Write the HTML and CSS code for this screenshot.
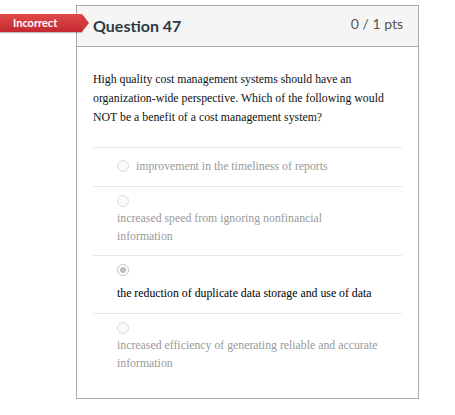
FILE: index.html
```html
<!DOCTYPE html>
<html>
<head>
<meta charset="utf-8">
<link rel="stylesheet" href="styles.css">
</head>
<body>
<div class="page">
  <div class="badge">Incorrect</div>
  <div class="card">
    <div class="card-header">
      <h2 class="q-title">Question 47</h2>
      <div class="q-points">0 / 1 pts</div>
    </div>
    <div class="card-body">
      <p class="q-text">High quality cost management systems should have an organization-wide perspective. Which of the following would NOT be a benefit of a cost management system?</p>
      <div class="answers">
        <div class="answer answer-inline">
          <span class="radio"></span><span class="answer-text">improvement in the timeliness of reports</span>
        </div>
        <div class="answer">
          <div class="radio-line"><span class="radio"></span></div>
          <div class="answer-text">increased speed from ignoring nonfinancial<br>information</div>
        </div>
        <div class="answer answer-selected">
          <div class="radio-line"><span class="radio radio-checked"></span></div>
          <div class="answer-text">the reduction of duplicate data storage and use of data</div>
        </div>
        <div class="answer answer-last">
          <div class="radio-line"><span class="radio"></span></div>
          <div class="answer-text">increased efficiency of generating reliable and accurate<br>information</div>
        </div>
      </div>
    </div>
  </div>
</div>
</body>
</html>
```

FILE: styles.css
```css
* { box-sizing: border-box; }
html, body { margin: 0; padding: 0; background: #fff; }
.page { position: relative; padding: 5px 0 0 76px; }
.badge {
  position: absolute;
  left: 0; top: 14px;
  width: 82px; height: 18px;
  background: linear-gradient(#e14a4a, #c42a2f);
  color: #fff;
  font: bold 11px/18px "Lato", "Liberation Sans", sans-serif;
  padding-left: 13px;
  z-index: 2;
  box-shadow: 0 1px 1px rgba(0,0,0,0.25);
}
.badge::after {
  content: "";
  position: absolute;
  left: 82px; top: 0;
  border-top: 9px solid transparent;
  border-bottom: 9px solid transparent;
  border-left: 7px solid #d43a3d;
}
.card {
  width: 343px;
  border: 1px solid #aaaaaa;
  background: #fff;
}
.card-header {
  height: 41px;
  background: #f5f5f5;
  border-bottom: 1px solid #aaaaaa;
  display: flex;
  justify-content: space-between;
  align-items: flex-start;
  padding: 0 15px 0 16px;
}
.q-title {
  margin: 0;
  padding-top: 10px;
  font: bold 16px/20px "Lato", sans-serif;
  color: #2d3b45;
}
.q-points {
  padding-top: 9px;
  font: 14px/18px "Lato", sans-serif;
  color: #555;
}
.card-body { padding: 23px 16px 16px 16px; }
.q-text {
  margin: 0 0 20px 0;
  font: 11.8px/19px "Liberation Serif", serif;
  color: #111;
}
.answers { font: 11.8px/18px "Liberation Serif", serif; }
.answer {
  border-top: 1px solid #e8e8e8;
  padding: 6px 0 10px 24px;
  color: #9a9a9a;
}
.answer-inline { padding: 9px 0 11px 24px; display: flex; align-items: center; }
.answer-inline .radio { margin-right: 7px; }
.radio-line { height: 16px; display: flex; align-items: center; }
.radio {
  display: inline-block;
  width: 12px; height: 12px;
  border-radius: 50%;
  border: 1px solid #dddddd;
  background: #fafafa;
  position: relative;
}
.radio-checked { border-color: #c8c8c8; background: #fff; }
.radio-checked::after {
  content: "";
  position: absolute;
  left: 2px; top: 2px;
  width: 6px; height: 6px;
  border-radius: 50%;
  background: #bdbdbd;
}
.answer-selected .answer-text { color: #000; margin-top: 6px; }
.answer-selected { padding-bottom: 11px; }
.answer-last { padding-bottom: 10px; }
```
